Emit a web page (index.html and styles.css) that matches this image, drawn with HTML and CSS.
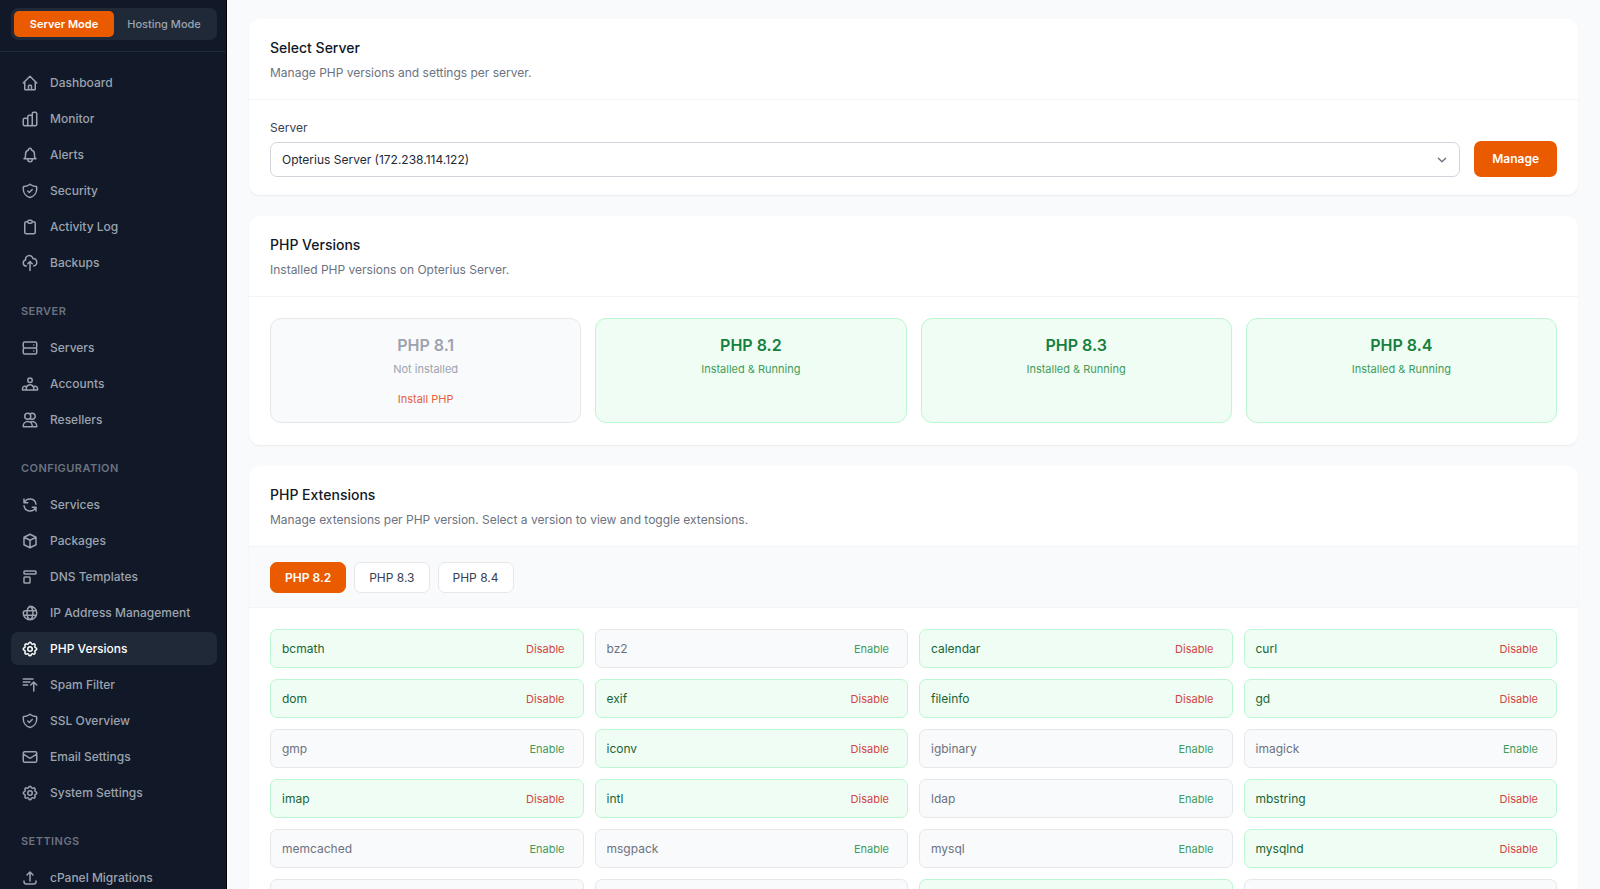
FILE: index.html
```html
<!DOCTYPE html>
<html lang="en">
<head>
<meta charset="utf-8">
<meta name="viewport" content="width=device-width, initial-scale=1">
<title>PHP Versions</title>
<link rel="stylesheet" href="styles.css">
</head>
<body>
<div class="app">
  <aside class="sidebar">
    <div class="mode-bar">
      <div class="mode-switch">
        <button type="button" class="mode mode-active">Server Mode</button>
        <button type="button" class="mode">Hosting Mode</button>
      </div>
    </div>
    <nav class="nav" aria-label="Main">
      <ul class="nav-list">
        <li><a class="nav-link" href="#"><svg class="icon" viewBox="0 0 24 24"><path d="M3 12l2-2m0 0l7-7 7 7M5 10v10a1 1 0 001 1h3m10-11l2 2m-2-2v10a1 1 0 01-1 1h-3m-6 0a1 1 0 001-1v-4a1 1 0 011-1h2a1 1 0 011 1v4a1 1 0 001 1m-6 0h6"/></svg>Dashboard</a></li>
        <li><a class="nav-link" href="#"><svg class="icon" viewBox="0 0 24 24"><path d="M9 19v-6a2 2 0 00-2-2H5a2 2 0 00-2 2v6a2 2 0 002 2h2a2 2 0 002-2zm0 0V9a2 2 0 012-2h2a2 2 0 012 2v10m-6 0a2 2 0 002 2h2a2 2 0 002-2m0 0V5a2 2 0 012-2h2a2 2 0 012 2v14a2 2 0 01-2 2h-2a2 2 0 01-2-2z"/></svg>Monitor</a></li>
        <li><a class="nav-link" href="#"><svg class="icon" viewBox="0 0 24 24"><path d="M15 17h5l-1.405-1.405A2.032 2.032 0 0118 14.158V11a6.002 6.002 0 00-4-5.659V5a2 2 0 10-4 0v.341C7.67 6.165 6 8.388 6 11v3.159c0 .538-.214 1.055-.595 1.436L4 17h5m6 0v1a3 3 0 11-6 0v-1m6 0H9"/></svg>Alerts</a></li>
        <li><a class="nav-link" href="#"><svg class="icon" viewBox="0 0 24 24"><path d="M9 12l2 2 4-4m5.618-4.016A11.955 11.955 0 0112 2.944a11.955 11.955 0 01-8.618 3.04A12.02 12.02 0 003 9c0 5.591 3.824 10.29 9 11.622 5.176-1.332 9-6.03 9-11.622 0-1.042-.133-2.052-.382-3.016z"/></svg>Security</a></li>
        <li><a class="nav-link" href="#"><svg class="icon" viewBox="0 0 24 24"><path d="M9 5H7a2 2 0 00-2 2v12a2 2 0 002 2h10a2 2 0 002-2V7a2 2 0 00-2-2h-2M9 5a2 2 0 002 2h2a2 2 0 002-2M9 5a2 2 0 012-2h2a2 2 0 012 2"/></svg>Activity Log</a></li>
        <li><a class="nav-link" href="#"><svg class="icon" viewBox="0 0 24 24"><path d="M7 16a4 4 0 01-.88-7.903A5 5 0 1115.9 6L16 6a5 5 0 011 9.9M15 13l-3-3m0 0l-3 3m3-3v12"/></svg>Backups</a></li>
      </ul>
      <h2 class="nav-heading">Server</h2>
      <ul class="nav-list">
        <li><a class="nav-link" href="#"><svg class="icon" viewBox="0 0 24 24"><path d="M5 12h14M5 12a2 2 0 01-2-2V6a2 2 0 012-2h14a2 2 0 012 2v4a2 2 0 01-2 2M5 12a2 2 0 00-2 2v4a2 2 0 002 2h14a2 2 0 002-2v-4a2 2 0 00-2-2m-2-4h.01M17 16h.01"/></svg>Servers</a></li>
        <li><a class="nav-link" href="#"><svg class="icon" viewBox="0 0 24 24"><path d="M17 20h5v-2a3 3 0 00-5.356-1.857M17 20H7m10 0v-2c0-.656-.126-1.283-.356-1.857M7 20H2v-2a3 3 0 015.356-1.857M7 20v-2c0-.656.126-1.283.356-1.857m0 0a5.002 5.002 0 019.288 0M15 7a3 3 0 11-6 0 3 3 0 016 0z"/></svg>Accounts</a></li>
        <li><a class="nav-link" href="#"><svg class="icon" viewBox="0 0 24 24"><path d="M12 4.354a4 4 0 110 5.292M15 21H3v-1a6 6 0 0112 0v1zm0 0h6v-1a6 6 0 00-9-5.197M13 7a4 4 0 11-8 0 4 4 0 018 0z"/></svg>Resellers</a></li>
      </ul>
      <h2 class="nav-heading">Configuration</h2>
      <ul class="nav-list">
        <li><a class="nav-link" href="#"><svg class="icon" viewBox="0 0 24 24"><path d="M4 4v5h.582m15.356 2A8.001 8.001 0 004.582 9m0 0H9m11 11v-5h-.581m0 0a8.003 8.003 0 01-15.357-2m15.357 2H15"/></svg>Services</a></li>
        <li><a class="nav-link" href="#"><svg class="icon" viewBox="0 0 24 24"><path d="M20 7l-8-4-8 4m16 0l-8 4m8-4v10l-8 4m0-10L4 7m8 4v10M4 7v10l8 4"/></svg>Packages</a></li>
        <li><a class="nav-link" href="#"><svg class="icon" viewBox="0 0 24 24"><path d="M4 5a1 1 0 011-1h14a1 1 0 011 1v2a1 1 0 01-1 1H5a1 1 0 01-1-1V5zM4 13a1 1 0 011-1h6a1 1 0 011 1v6a1 1 0 01-1 1H5a1 1 0 01-1-1v-6z"/></svg>DNS Templates</a></li>
        <li><a class="nav-link" href="#"><svg class="icon" viewBox="0 0 24 24"><path d="M12 3a9 9 0 11-9 9c0-2 1-3 3-3h14.500M3.500 15h17M12 3c-2.500 1.500-4 5-4 9s1.500 7.500 4 9c2.500-1.500 4-5 4-9s-1.500-7.500-4-9z"/></svg>IP Address Management</a></li>
        <li><a class="nav-link nav-link-active" href="#" aria-current="page"><svg class="icon" viewBox="0 0 24 24"><path d="M10.325 4.317c.426-1.756 2.924-1.756 3.35 0a1.724 1.724 0 002.573 1.066c1.543-.94 3.31.826 2.37 2.37a1.724 1.724 0 001.065 2.572c1.756.426 1.756 2.924 0 3.35a1.724 1.724 0 00-1.066 2.573c.94 1.543-.826 3.31-2.37 2.37a1.724 1.724 0 00-2.572 1.065c-.426 1.756-2.924 1.756-3.35 0a1.724 1.724 0 00-2.573-1.066c-1.543.94-3.31-.826-2.37-2.37a1.724 1.724 0 00-1.065-2.572c-1.756-.426-1.756-2.924 0-3.35a1.724 1.724 0 001.066-2.573c-.94-1.543.826-3.31 2.37-2.37.996.608 2.296.07 2.572-1.065z"/><circle cx="12" cy="12" r="3"/></svg>PHP Versions</a></li>
        <li><a class="nav-link" href="#"><svg class="icon" viewBox="0 0 24 24"><path d="M3 4h13M3 8h9m-9 4h6m4 0l4-4m0 0l4 4m-4-4v12"/></svg>Spam Filter</a></li>
        <li><a class="nav-link" href="#"><svg class="icon" viewBox="0 0 24 24"><path d="M9 12l2 2 4-4m5.618-4.016A11.955 11.955 0 0112 2.944a11.955 11.955 0 01-8.618 3.04A12.02 12.02 0 003 9c0 5.591 3.824 10.29 9 11.622 5.176-1.332 9-6.03 9-11.622 0-1.042-.133-2.052-.382-3.016z"/></svg>SSL Overview</a></li>
        <li><a class="nav-link" href="#"><svg class="icon" viewBox="0 0 24 24"><path d="M3 8l7.89 5.26a2 2 0 002.22 0L21 8M5 19h14a2 2 0 002-2V7a2 2 0 00-2-2H5a2 2 0 00-2 2v10a2 2 0 002 2z"/></svg>Email Settings</a></li>
        <li><a class="nav-link" href="#"><svg class="icon" viewBox="0 0 24 24"><path d="M10.325 4.317c.426-1.756 2.924-1.756 3.35 0a1.724 1.724 0 002.573 1.066c1.543-.94 3.31.826 2.37 2.37a1.724 1.724 0 001.065 2.572c1.756.426 1.756 2.924 0 3.35a1.724 1.724 0 00-1.066 2.573c.94 1.543-.826 3.31-2.37 2.37a1.724 1.724 0 00-2.572 1.065c-.426 1.756-2.924 1.756-3.35 0a1.724 1.724 0 00-2.573-1.066c-1.543.94-3.31-.826-2.37-2.37a1.724 1.724 0 00-1.065-2.572c-1.756-.426-1.756-2.924 0-3.35a1.724 1.724 0 001.066-2.573c-.94-1.543.826-3.31 2.37-2.37.996.608 2.296.07 2.572-1.065z"/><circle cx="12" cy="12" r="3"/></svg>System Settings</a></li>
      </ul>
      <h2 class="nav-heading">Settings</h2>
      <ul class="nav-list">
        <li><a class="nav-link" href="#"><svg class="icon" viewBox="0 0 24 24"><path d="M4 16v1a3 3 0 003 3h10a3 3 0 003-3v-1m-4-8l-4-4m0 0L8 8m4-4v12"/></svg>cPanel Migrations</a></li>
      </ul>
    </nav>
  </aside>

  <main class="content">
    <section class="card">
      <header class="card-header">
        <h1 class="card-title">Select Server</h1>
        <p class="card-text">Manage PHP versions and settings per server.</p>
      </header>
      <form class="server-form">
        <div class="field">
          <label class="field-label" for="server">Server</label>
          <div class="select-wrap">
            <select class="select" id="server"><option>Opterius Server (172.238.114.122)</option></select>
            <svg class="chevron" viewBox="0 0 20 20"><path d="M6 8l4 4 4-4"/></svg>
          </div>
        </div>
        <button type="button" class="button">Manage</button>
      </form>
    </section>

    <section class="card">
      <header class="card-header">
        <h2 class="card-title">PHP Versions</h2>
        <p class="card-text">Installed PHP versions on Opterius Server.</p>
      </header>
      <div class="versions">
        <article class="version">
          <h3 class="version-name">PHP 8.1</h3>
          <p class="version-status">Not installed</p>
          <button type="button" class="install">Install PHP</button>
        </article>
        <article class="version version-on">
          <h3 class="version-name">PHP 8.2</h3>
          <p class="version-status">Installed &amp; Running</p>
        </article>
        <article class="version version-on">
          <h3 class="version-name">PHP 8.3</h3>
          <p class="version-status">Installed &amp; Running</p>
        </article>
        <article class="version version-on">
          <h3 class="version-name">PHP 8.4</h3>
          <p class="version-status">Installed &amp; Running</p>
        </article>
      </div>
    </section>

    <section class="card">
      <header class="card-header">
        <h2 class="card-title">PHP Extensions</h2>
        <p class="card-text">Manage extensions per PHP version. Select a version to view and toggle extensions.</p>
      </header>
      <div class="tabs">
        <button type="button" class="tab tab-active">PHP 8.2</button>
        <button type="button" class="tab">PHP 8.3</button>
        <button type="button" class="tab">PHP 8.4</button>
      </div>
      <ul class="extensions">
        <li class="ext ext-on"><span>bcmath</span><button type="button" class="toggle">Disable</button></li>
        <li class="ext"><span>bz2</span><button type="button" class="toggle">Enable</button></li>
        <li class="ext ext-on"><span>calendar</span><button type="button" class="toggle">Disable</button></li>
        <li class="ext ext-on"><span>curl</span><button type="button" class="toggle">Disable</button></li>
        <li class="ext ext-on"><span>dom</span><button type="button" class="toggle">Disable</button></li>
        <li class="ext ext-on"><span>exif</span><button type="button" class="toggle">Disable</button></li>
        <li class="ext ext-on"><span>fileinfo</span><button type="button" class="toggle">Disable</button></li>
        <li class="ext ext-on"><span>gd</span><button type="button" class="toggle">Disable</button></li>
        <li class="ext"><span>gmp</span><button type="button" class="toggle">Enable</button></li>
        <li class="ext ext-on"><span>iconv</span><button type="button" class="toggle">Disable</button></li>
        <li class="ext"><span>igbinary</span><button type="button" class="toggle">Enable</button></li>
        <li class="ext"><span>imagick</span><button type="button" class="toggle">Enable</button></li>
        <li class="ext ext-on"><span>imap</span><button type="button" class="toggle">Disable</button></li>
        <li class="ext ext-on"><span>intl</span><button type="button" class="toggle">Disable</button></li>
        <li class="ext"><span>ldap</span><button type="button" class="toggle">Enable</button></li>
        <li class="ext ext-on"><span>mbstring</span><button type="button" class="toggle">Disable</button></li>
        <li class="ext"><span>memcached</span><button type="button" class="toggle">Enable</button></li>
        <li class="ext"><span>msgpack</span><button type="button" class="toggle">Enable</button></li>
        <li class="ext"><span>mysql</span><button type="button" class="toggle">Enable</button></li>
        <li class="ext ext-on"><span>mysqlnd</span><button type="button" class="toggle">Disable</button></li>
        <li class="ext"></li>
        <li class="ext"></li>
        <li class="ext ext-on"></li>
        <li class="ext"></li>
      </ul>
    </section>
  </main>
</div>
</body>
</html>
```
FILE: styles.css
```css
*,
*::before,
*::after {
  box-sizing: border-box;
}

body {
  margin: 0;
  background: #f9fafb;
  color: #111827;
  font-family: Inter, "Liberation Sans", sans-serif;
  font-size: 12px;
  line-height: 18px;
}

h1, h2, h3, p, ul {
  margin: 0;
  padding: 0;
}

ul {
  list-style: none;
}

button,
select {
  font: inherit;
  cursor: pointer;
}

.app {
  display: flex;
  height: 100vh;
  overflow: hidden;
}

/* Sidebar */
.sidebar {
  flex: 0 0 227px;
  overflow: hidden;
  background: #111827;
  border-right: 1px solid #000;
}

.mode-bar {
  padding: 8px 9px 11px 11px;
  border-bottom: 1px solid #1f2937;
}

.mode-switch {
  display: flex;
  padding: 3px;
  background: #1f2937;
  border-radius: 7px;
}

.mode {
  flex: 1;
  height: 26px;
  padding: 0;
  border: 0;
  border-radius: 5px;
  background: transparent;
  color: #9ca3af;
  font-size: 11px;
  font-weight: 500;
  white-space: nowrap;
}

.mode-active {
  background: #ea5b00;
  color: #fff;
  font-weight: 600;
}

.nav {
  padding: 14px 9px 14px 11px;
}

.nav-list {
  display: grid;
  gap: 3px;
}

.nav-link {
  display: flex;
  align-items: center;
  gap: 11px;
  height: 33px;
  padding: 0 10px;
  border-radius: 7px;
  color: #9ca3af;
  font-weight: 500;
  text-decoration: none;
  white-space: nowrap;
}

.nav-link-active {
  background: #1f2937;
  color: #fff;
}

.nav-heading {
  padding: 25px 10px 13px;
  color: #6b7280;
  font-size: 11px;
  font-weight: 600;
  line-height: 14px;
  letter-spacing: 0.04em;
  text-transform: uppercase;
}

.icon {
  flex: none;
  width: 18px;
  height: 18px;
  fill: none;
  stroke: currentColor;
  stroke-width: 2;
  stroke-linecap: round;
  stroke-linejoin: round;
}

/* Cards */
.content {
  flex: 1;
  min-width: 0;
  overflow: hidden;
  padding: 19px 22px;
}

.card {
  margin-bottom: 21px;
  overflow: hidden;
  background: #fff;
  border-radius: 11px;
  box-shadow: 0 1px 2px rgba(0, 0, 0, 0.06);
}

.card-header {
  padding: 18px 21px 17px;
  border-bottom: 1px solid #f3f4f6;
}

.card-title {
  font-size: 14px;
  font-weight: 500;
  line-height: 22px;
}

.card-text {
  margin-top: 5px;
  color: #6b7280;
}

/* Server form */
.server-form {
  display: flex;
  align-items: flex-end;
  gap: 14px;
  padding: 18px 21px;
}

.field {
  flex: 1;
}

.field-label {
  display: block;
  margin-bottom: 4px;
  color: #374151;
  line-height: 20px;
}

.select-wrap {
  display: grid;
  align-items: center;
}

.select,
.chevron {
  grid-area: 1 / 1;
}

.select {
  width: 100%;
  height: 35px;
  padding: 0 36px 0 11px;
  appearance: none;
  background: #fff;
  border: 1px solid #d1d5db;
  border-radius: 7px;
  color: #1f2937;
}

.chevron {
  justify-self: end;
  width: 18px;
  height: 18px;
  margin-right: 9px;
  fill: none;
  stroke: #6b7280;
  stroke-width: 1.5;
  stroke-linecap: round;
  stroke-linejoin: round;
  pointer-events: none;
}

.button {
  height: 36px;
  padding: 0 18px;
  border: 0;
  border-radius: 7px;
  background: #ea5b00;
  color: #fff;
  font-weight: 600;
}

/* Version tiles */
.versions {
  display: grid;
  grid-template-columns: repeat(4, 1fr);
  gap: 14px;
  padding: 21px 21px 22px;
}

.version {
  display: flex;
  flex-direction: column;
  align-items: center;
  padding: 15px;
  background: #f9fafb;
  border: 1px solid #e5e7eb;
  border-radius: 11px;
  color: #9ca3af;
}

.version-on {
  background: #f0fdf4;
  border-color: #bbf7d0;
  color: #15803d;
}

.version-name {
  font-size: 16px;
  font-weight: 600;
  line-height: 22px;
}

.version-status {
  margin-top: 5px;
  font-size: 11px;
  line-height: 16px;
}

.version-on .version-status {
  color: #3f9c5b;
}

.install {
  margin-top: 14px;
  padding: 0;
  border: 0;
  background: none;
  color: #e3623c;
  font-size: 11px;
  line-height: 16px;
}

/* Extensions */
.tabs {
  display: flex;
  gap: 8px;
  padding: 15px 21px 14px;
  background: #f9fafb;
  border-bottom: 1px solid #f3f4f6;
}

.tab {
  height: 31px;
  padding: 0 14px;
  background: #fff;
  border: 1px solid #e5e7eb;
  border-radius: 7px;
  color: #374151;
}

.tab-active {
  background: #ea5b00;
  border-color: #ea5b00;
  color: #fff;
  font-weight: 600;
}

.extensions {
  display: grid;
  grid-template-columns: repeat(4, 1fr);
  gap: 11px;
  padding: 21px;
}

.ext {
  display: flex;
  align-items: center;
  justify-content: space-between;
  min-height: 39px;
  padding: 0 11px;
  background: #f9fafb;
  border: 1px solid #e5e7eb;
  border-radius: 7px;
  color: #6b7280;
}

.ext-on {
  background: #f0fdf4;
  border-color: #bbf7d0;
  color: #166534;
}

.toggle {
  padding: 0 7px;
  border: 0;
  background: none;
  color: #3f9c5b;
  font-size: 11px;
  line-height: 16px;
}

.ext-on .toggle {
  color: #d04545;
}
```
